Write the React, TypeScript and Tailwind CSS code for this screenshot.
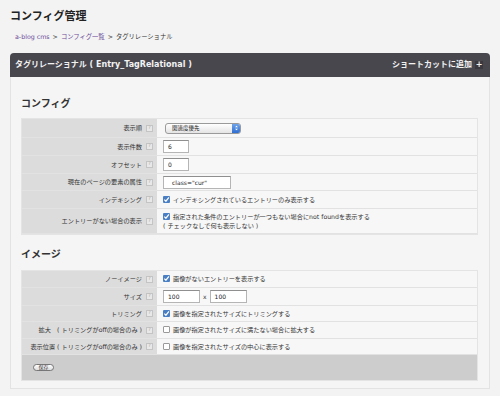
import React from "react";

const font = {
  fontFamily: '"DejaVu Sans", "Noto Sans CJK JP", sans-serif',
};

const HelpIcon: React.FC = () => (
  <span className="ml-[4px] inline-flex h-[7px] w-[7px] items-center justify-center border border-[#c4c4c4] bg-[#e8e8e8] text-[4.5px] leading-none text-[#aaa]">
    ?
  </span>
);

const Check: React.FC<{ checked?: boolean }> = ({ checked }) =>
  checked ? (
    <span className="mr-[3px] inline-flex h-[7px] w-[7px] shrink-0 items-center justify-center rounded-[1px] bg-[#4a7fc4]">
      <svg viewBox="0 0 8 8" className="h-[7px] w-[7px]">
        <path d="M1.5 4.2 L3.3 6 L6.8 1.5" stroke="#fff" strokeWidth="1.4" fill="none" />
      </svg>
    </span>
  ) : (
    <span className="mr-[3px] inline-block h-[7px] w-[7px] shrink-0 rounded-[1px] border border-[#9a9a9a] bg-white" />
  );

const Input: React.FC<{ value: string; w: string }> = ({ value, w }) => (
  <span
    className={`inline-flex h-[13px] items-center border border-[#b5b5b5] border-t-[#8f8f8f] bg-white pl-[4px] text-[6px] text-[#222] ${w}`}
  >
    {value}
  </span>
);

interface Row {
  label: string;
  h: string;
  content: React.ReactNode;
}

const Table: React.FC<{ rows: Row[]; footer?: React.ReactNode }> = ({ rows, footer }) => (
  <div className="border border-[#e4e4e4]">
    {rows.map((r, i) => (
      <div key={i} className={`flex border-b border-[#e2e2e2] ${r.h}`}>
        <div className="flex w-[135px] shrink-0 items-center justify-end bg-[#dcdcdc] pr-[4px] text-[6.2px] text-[#333]">
          <span className="whitespace-nowrap">{r.label}</span>
          <HelpIcon />
        </div>
        <div className="flex flex-1 items-center bg-[#f7f7f7] pl-[6px] text-[6.2px] text-[#333]">
          {r.content}
        </div>
      </div>
    ))}
    {footer}
  </div>
);

const App: React.FC = () => {
  const configRows: Row[] = [
    {
      label: "表示順",
      h: "h-[19px]",
      content: (
        <span className="ml-[2px] flex h-[11px] w-[76px] items-center justify-between rounded-[3px] border border-[#9a9a9a] bg-gradient-to-b from-[#ffffff] to-[#e4e4e4] pl-[6px] text-[5.5px] text-[#222]">
          関連度優先
          <span className="flex h-[9px] w-[8px] flex-col items-center justify-center rounded-r-[2px] bg-gradient-to-b from-[#6fa4ea] to-[#2f6dd0]">
            <svg viewBox="0 0 6 8" className="h-[6px] w-[5px]">
              <path d="M1 3 L3 1 L5 3 Z M1 5 L3 7 L5 5 Z" fill="#fff" />
            </svg>
          </span>
        </span>
      ),
    },
    { label: "表示件数", h: "h-[18px]", content: <Input value="6" w="w-[26px]" /> },
    { label: "オフセット", h: "h-[18px]", content: <Input value="0" w="w-[26px]" /> },
    {
      label: "現在のページの要素の属性",
      h: "h-[17px]",
      content: <Input value={'class="cur"'} w="w-[68px] pl-[8px]" />,
    },
    {
      label: "インデキシング",
      h: "h-[18px]",
      content: (
        <span className="flex items-center">
          <Check checked />
          インデキシングされているエントリーのみ表示する
        </span>
      ),
    },
    {
      label: "エントリーがない場合の表示",
      h: "h-[25px]",
      content: (
        <div className="flex flex-col leading-[9px]">
          <span className="flex items-center">
            <Check checked />
            指定された条件のエントリーが一つもない場合にnot foundを表示する
          </span>
          <span>( チェックなしで何も表示しない )</span>
        </div>
      ),
    },
  ];

  const imageRows: Row[] = [
    {
      label: "ノーイメージ",
      h: "h-[17px]",
      content: (
        <span className="flex items-center">
          <Check checked />
          画像がないエントリーを表示する
        </span>
      ),
    },
    {
      label: "サイズ",
      h: "h-[18px]",
      content: (
        <span className="flex items-center">
          <Input value="100" w="w-[37px]" />
          <span className="mx-[3px] text-[6px]">x</span>
          <Input value="100" w="w-[37px]" />
        </span>
      ),
    },
    {
      label: "トリミング",
      h: "h-[16px]",
      content: (
        <span className="flex items-center">
          <Check checked />
          画像を指定されたサイズにトリミングする
        </span>
      ),
    },
    {
      label: "拡大　( トリミングがoffの場合のみ )",
      h: "h-[17px]",
      content: (
        <span className="flex items-center">
          <Check />
          画像が指定されたサイズに満たない場合に拡大する
        </span>
      ),
    },
    {
      label: "表示位置 ( トリミングがoffの場合のみ )",
      h: "h-[16px]",
      content: (
        <span className="flex items-center">
          <Check />
          画像を指定されたサイズの中心に表示する
        </span>
      ),
    },
  ];

  return (
    <div className="h-[396px] w-[500px] overflow-hidden bg-[#f3f3f3] px-[10px]" style={font}>
      <h1 className="pt-[10px] text-[11px] font-bold leading-[14px] text-[#222]">コンフィグ管理</h1>
      <div className="mt-[8px] flex items-center gap-[3px] pl-[5px] text-[6.3px] leading-[9px]">
        <span className="text-[#6b4c9a]">a-blog cms</span>
        <span className="text-[#444]">&gt;</span>
        <span className="text-[#6b4c9a]">コンフィグ一覧</span>
        <span className="text-[#444]">&gt;</span>
        <span className="text-[#333]">タグリレーショナル</span>
      </div>

      <div className="mt-[12px] w-[480px]">
        <div className="flex h-[24px] items-center justify-between rounded-t-[4px] bg-[#48474e] pl-[5px] pr-[7px] text-[8px] font-bold text-[#f2f2f2]">
          <span>タグリレーショナル ( Entry_TagRelational )</span>
          <span className="flex items-center">
            ショートカットに追加
            <span className="ml-[3px] flex h-[8px] w-[8px] items-center justify-center bg-[#3a393f] text-[8px] leading-none">
              +
            </span>
          </span>
        </div>
        <div className="border-x border-b border-[#e3e3e3] bg-[#f5f5f5] pb-[7px] pl-[10px] pr-[11px] pt-[20px]">
          <h2 className="mb-[7px] text-[10px] font-bold leading-[14px] text-[#333]">コンフィグ</h2>
          <Table rows={configRows} />
          <h2 className="mb-[8px] mt-[13px] text-[10px] font-bold leading-[14px] text-[#333]">イメージ</h2>
          <Table
            rows={imageRows}
            footer={
              <div className="flex h-[25px] items-center bg-[#cdcdcd] pl-[11px]">
                <span className="flex h-[7px] w-[21px] items-center justify-center rounded-full border border-[#777] bg-gradient-to-b from-white to-[#ddd] text-[5px] text-[#333]">
                  保存
                </span>
              </div>
            }
          />
        </div>
      </div>
    </div>
  );
};

export default App;
